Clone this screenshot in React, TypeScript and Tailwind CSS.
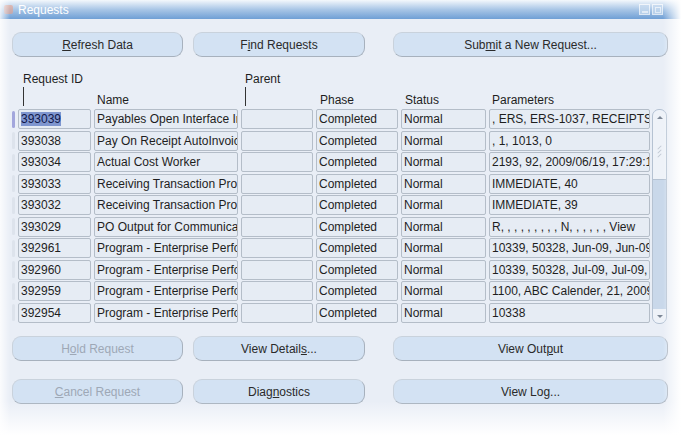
import React from "react"

type Row = {
    id: string
    name: string
    phase: string
    status: string
    params: string
}

const rows: Row[] = [
    { id: "393039", name: "Payables Open Interface Import", phase: "Completed", status: "Normal", params: ", ERS, ERS-1037, RECEIPTS, N" },
    { id: "393038", name: "Pay On Receipt AutoInvoice", phase: "Completed", status: "Normal", params: ", 1, 1013, 0" },
    { id: "393034", name: "Actual Cost Worker", phase: "Completed", status: "Normal", params: "2193, 92, 2009/06/19, 17:29:15" },
    { id: "393033", name: "Receiving Transaction Processor", phase: "Completed", status: "Normal", params: "IMMEDIATE, 40" },
    { id: "393032", name: "Receiving Transaction Processor", phase: "Completed", status: "Normal", params: "IMMEDIATE, 39" },
    { id: "393029", name: "PO Output for Communication", phase: "Completed", status: "Normal", params: "R, , , , , , , , , N, , , , , , View" },
    { id: "392961", name: "Program - Enterprise Performance", phase: "Completed", status: "Normal", params: "10339, 50328, Jun-09, Jun-09, ," },
    { id: "392960", name: "Program - Enterprise Performance", phase: "Completed", status: "Normal", params: "10339, 50328, Jul-09, Jul-09, , ," },
    { id: "392959", name: "Program - Enterprise Performance", phase: "Completed", status: "Normal", params: "1100, ABC Calender, 21, 2009" },
    { id: "392954", name: "Program - Enterprise Performance", phase: "Completed", status: "Normal", params: "10338" },
]

function Btn({ w, disabled, children }: { w: string; disabled?: boolean; children: React.ReactNode }) {
    return (
        <div
            className={`${w} h-[25px] rounded-[9px] border border-[#a7b1bd] border-l-[#c9d2dc] border-t-[#c9d2dc] bg-[#d3e2f3] flex items-center justify-center text-[12px] ${disabled ? "text-[#9ea8b6]" : "text-[#2a2a2a]"}`}
        >
            {children}
        </div>
    )
}

function Cell({ w, children, selected }: { w: string; children?: React.ReactNode; selected?: boolean }) {
    return (
        <div className={`${w} h-[20px] border border-[#b4bdc8] rounded-[2px] bg-[#e6ecf4] px-[2px] flex items-center overflow-hidden whitespace-nowrap text-[12px] text-[#1e1e1e]`}>
            {selected ? <span className="bg-[#7f96cf] text-[#10184a] leading-[14px]">{children}</span> : children}
        </div>
    )
}

export default function App() {
    return (
        <div className="relative w-[681px] h-[435px] overflow-hidden bg-[#e9eef6]" style={{ fontFamily: '"Liberation Sans", Arial, sans-serif' }}>
            {/* title bar */}
            <div className="h-[19px] bg-gradient-to-b from-[#f4f8fc] via-[#a9c6e6] to-[#6f9fd5] flex items-center justify-between px-[4px]">
                <div className="flex items-center gap-[5px]">
                    <div className="w-[9px] h-[9px] rounded-[2px] bg-[#e8a08a] opacity-60" />
                    <span className="text-[12px] text-white leading-none">Requests</span>
                </div>
                <div className="flex items-center gap-[2px] pr-[14px] opacity-70">
                    <div className="w-[11px] h-[11px] border border-white bg-[#c9dcf0] flex items-end justify-center pb-[1px]">
                        <div className="w-[6px] h-[2px] bg-white" />
                    </div>
                    <div className="w-[11px] h-[11px] border border-white bg-[#c9dcf0] flex items-center justify-center">
                        <div className="w-[6px] h-[6px] border border-white" />
                    </div>
                </div>
            </div>

            {/* top buttons */}
            <div className="flex pl-[12px] pt-[13px]">
                <Btn w="w-[171px]"><span><span className="underline">R</span>efresh Data</span></Btn>
                <div className="w-[10px]" />
                <Btn w="w-[172px]"><span>F<span className="underline">i</span>nd Requests</span></Btn>
                <div className="w-[28px]" />
                <Btn w="w-[275px]"><span>Sub<span className="underline">m</span>it a New Request...</span></Btn>
            </div>

            {/* header */}
            <div className="relative h-[52px] pl-[23px] text-[12px] text-[#1e1e1e]">
                <div className="flex pt-[15px]">
                    <div className="w-[222px] flex flex-col">
                        <span className="leading-[14px]">Request ID</span>
                        <div className="mt-[1px] w-[1px] h-[19px] bg-[#333]" />
                    </div>
                    <div className="flex flex-col">
                        <span className="leading-[14px]">Parent</span>
                        <div className="mt-[1px] w-[1px] h-[19px] bg-[#333]" />
                    </div>
                </div>
                <div className="absolute left-0 top-[36px] w-full leading-[14px]">
                    <span className="absolute left-[97px]">Name</span>
                    <span className="absolute left-[320px]">Phase</span>
                    <span className="absolute left-[405px]">Status</span>
                    <span className="absolute left-[492px]">Parameters</span>
                </div>
            </div>

            {/* table */}
            <div className="flex pl-[12px]">
                <div className="flex flex-col">
                    {rows.map((r, i) => (
                        <div key={r.id} className="h-[21.5px] flex items-start">
                            <div className="w-[6px] h-[20px] flex items-center">
                                <div className={`w-[3px] h-[17px] rounded-[2px] ${i === 0 ? "bg-[#a2a6dc]" : "bg-[#dde3ec]"}`} />
                            </div>
                            <div className="flex gap-[3px]">
                                <Cell w="w-[73px]" selected={i === 0}>{r.id}</Cell>
                                <Cell w="w-[144px]">{r.name}</Cell>
                                <Cell w="w-[72px]" />
                                <Cell w="w-[82px]">{r.phase}</Cell>
                                <Cell w="w-[85px]">{r.status}</Cell>
                                <Cell w="w-[161px]">{r.params}</Cell>
                            </div>
                        </div>
                    ))}
                </div>
                {/* scrollbar */}
                <div className="ml-[2px] w-[15px] h-[215px] rounded-[7px] border border-[#b5c2d2] bg-[#c9d8ea] flex flex-col overflow-hidden">
                    <div className="h-[14px] bg-[#eef2f8] flex items-center justify-center">
                        <div className="w-0 h-0 border-l-[3px] border-r-[3px] border-b-[3px] border-l-transparent border-r-transparent border-b-[#7d8796]" />
                    </div>
                    <div className="h-[56px] bg-[#eef2f8] border-b border-[#b5c2d2] flex flex-col items-center justify-center gap-[3px]">
                        <div className="w-[5px] h-[1px] bg-[#c0c8d3] -rotate-45" />
                        <div className="w-[5px] h-[1px] bg-[#c0c8d3] -rotate-45" />
                        <div className="w-[5px] h-[1px] bg-[#c0c8d3] -rotate-45" />
                    </div>
                    <div className="flex-1" />
                    <div className="h-[14px] bg-[#eef2f8] flex items-center justify-center">
                        <div className="w-0 h-0 border-l-[3px] border-r-[3px] border-t-[3px] border-l-transparent border-r-transparent border-t-[#7d8796]" />
                    </div>
                </div>
            </div>

            {/* bottom buttons */}
            <div className="flex pl-[12px] pt-[12px]">
                <Btn w="w-[171px]" disabled><span>H<span className="underline">o</span>ld Request</span></Btn>
                <div className="w-[10px]" />
                <Btn w="w-[172px]"><span>View Detail<span className="underline">s</span>...</span></Btn>
                <div className="w-[28px]" />
                <Btn w="w-[275px]"><span>View Out<span className="underline">p</span>ut</span></Btn>
            </div>
            <div className="flex pl-[12px] pt-[18px]">
                <Btn w="w-[171px]" disabled><span><span className="underline">C</span>ancel Request</span></Btn>
                <div className="w-[10px]" />
                <Btn w="w-[172px]"><span>Diag<span className="underline">n</span>ostics</span></Btn>
                <div className="w-[28px]" />
                <Btn w="w-[275px]"><span>View Log...</span></Btn>
            </div>

            {/* edge fades */}
            <div className="pointer-events-none absolute left-0 right-0 bottom-0 h-[34px] bg-gradient-to-b from-transparent to-white" />
            <div className="pointer-events-none absolute top-0 bottom-0 right-0 w-[18px] bg-gradient-to-r from-transparent to-white" />
            <div className="pointer-events-none absolute top-0 bottom-0 left-0 w-[10px] bg-gradient-to-l from-transparent to-white/80" />
        </div>
    )
}
